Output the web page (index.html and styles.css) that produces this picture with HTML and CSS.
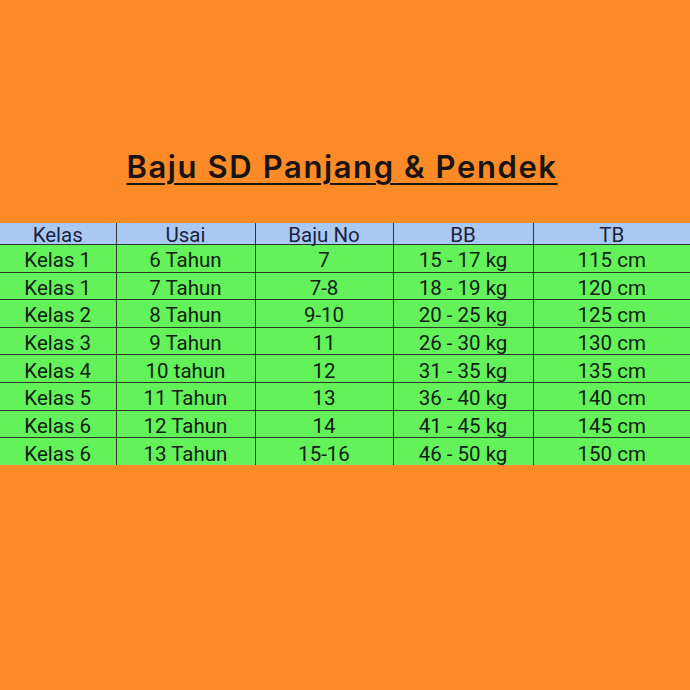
FILE: index.html
```html
<!DOCTYPE html>
<html>
<head>
<meta charset="utf-8">
<link rel="stylesheet" href="styles.css">
</head>
<body>
<div class="page">
  <h1 class="title">Baju SD Panjang &amp; Pendek</h1>
  <table class="size-table">
    <thead>
      <tr><th>Kelas</th><th>Usai</th><th>Baju No</th><th>BB</th><th>TB</th></tr>
    </thead>
    <tbody>
      <tr><td class="kelas">Kelas 1</td><td>6 Tahun</td><td>7</td><td>15 - 17 kg</td><td>115 cm</td></tr>
      <tr><td class="kelas">Kelas 1</td><td>7 Tahun</td><td>7-8</td><td>18 - 19 kg</td><td>120 cm</td></tr>
      <tr><td class="kelas">Kelas 2</td><td>8 Tahun</td><td>9-10</td><td>20 - 25 kg</td><td>125 cm</td></tr>
      <tr><td class="kelas">Kelas 3</td><td>9 Tahun</td><td>11</td><td>26 - 30 kg</td><td>130 cm</td></tr>
      <tr><td class="kelas">Kelas 4</td><td>10 tahun</td><td>12</td><td>31 - 35 kg</td><td>135 cm</td></tr>
      <tr><td class="kelas">Kelas 5</td><td>11 Tahun</td><td>13</td><td>36 - 40 kg</td><td>140 cm</td></tr>
      <tr><td class="kelas">Kelas 6</td><td>12 Tahun</td><td>14</td><td>41 - 45 kg</td><td>145 cm</td></tr>
      <tr><td class="kelas">Kelas 6</td><td>13 Tahun</td><td>15-16</td><td>46 - 50 kg</td><td>150 cm</td></tr>
    </tbody>
  </table>
</div>
</body>
</html>
```
FILE: styles.css
```css
html, body {
  margin: 0;
  padding: 0;
  background: #fb8a27;
}
.page {
  width: 690px;
  height: 690px;
  background: #fb8a27;
  padding-top: 144px;
  box-sizing: border-box;
}
.title {
  margin: 0;
  height: 79px;
  text-align: center;
  font-family: Inter, sans-serif;
  font-weight: 600;
  font-size: 31px;
  letter-spacing: 1.6px;
  line-height: 46px;
  color: #1a1410;
  text-decoration: underline;
  text-decoration-thickness: 2px;
  text-underline-offset: 5px;
  padding-right: 6px;
  box-sizing: border-box;
}
.size-table {
  width: 690px;
  border-collapse: collapse;
  table-layout: fixed;
  font-family: Roboto, "Liberation Sans", sans-serif;
  font-size: 20.5px;
}
.size-table th, .size-table td {
  border: 1px solid #2d3a2a;
  text-align: center;
  padding: 0;
  white-space: nowrap;
}
.size-table th:first-child, .size-table td:first-child { border-left: none; }
.size-table th:last-child, .size-table td:last-child { border-right: none; }
.size-table th {
  background: #a9c9f2;
  color: #1b2342;
  font-weight: 400;
  height: 21px;
  line-height: 18px;
  padding-top: 3px;
  box-sizing: border-box;
  border-top: none;
}
.size-table td {
  background: #63f25a;
  color: #102010;
  height: 27.6px;
  line-height: 22px;
  padding-top: 4px;
  box-sizing: border-box;
}
.size-table tbody tr:last-child td { border-bottom: none; }
.size-table th:nth-child(1) { width: 116px; }
.size-table th:nth-child(2) { width: 139px; }
.size-table th:nth-child(3) { width: 138px; }
.size-table th:nth-child(4) { width: 140px; }
```
